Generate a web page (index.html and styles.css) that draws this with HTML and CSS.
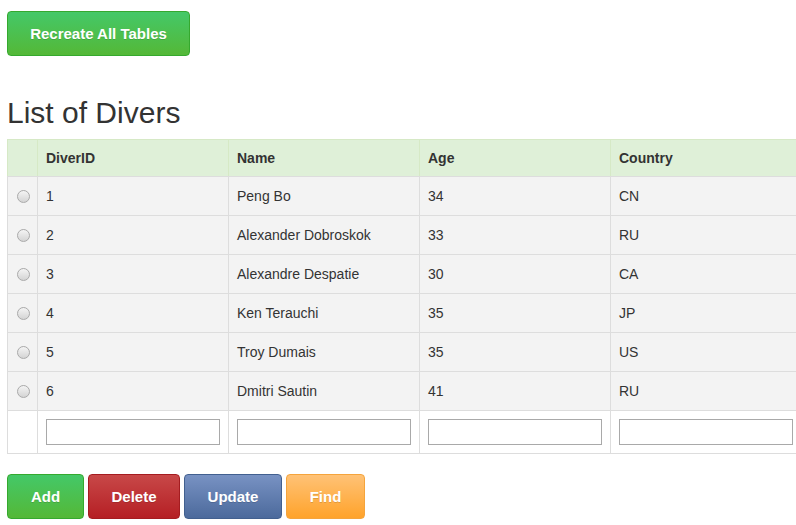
FILE: index.html
```html
<!DOCTYPE html>
<html>
<head>
<meta charset="utf-8">
<link rel="stylesheet" href="styles.css">
</head>
<body>
<div class="page">
  <div class="top-bar">
    <button class="btn btn-green btn-wide">Recreate All Tables</button>
  </div>
  <h2 class="title">List of Divers</h2>
  <table class="grid">
    <thead>
      <tr><th class="sel"></th><th>DiverID</th><th>Name</th><th>Age</th><th>Country</th></tr>
    </thead>
    <tbody>
      <tr><td class="sel"><span class="radio"></span></td><td>1</td><td>Peng Bo</td><td>34</td><td>CN</td></tr>
      <tr><td class="sel"><span class="radio"></span></td><td>2</td><td>Alexander Dobroskok</td><td>33</td><td>RU</td></tr>
      <tr><td class="sel"><span class="radio"></span></td><td>3</td><td>Alexandre Despatie</td><td>30</td><td>CA</td></tr>
      <tr><td class="sel"><span class="radio"></span></td><td>4</td><td>Ken Terauchi</td><td>35</td><td>JP</td></tr>
      <tr><td class="sel"><span class="radio"></span></td><td>5</td><td>Troy Dumais</td><td>35</td><td>US</td></tr>
      <tr><td class="sel"><span class="radio"></span></td><td>6</td><td>Dmitri Sautin</td><td>41</td><td>RU</td></tr>
      <tr class="input-row"><td class="sel"></td><td><input type="text"></td><td><input type="text"></td><td><input type="text"></td><td><input type="text"></td></tr>
    </tbody>
  </table>
  <div class="actions">
    <button class="btn btn-green">Add</button>
    <button class="btn btn-red">Delete</button>
    <button class="btn btn-blue">Update</button>
    <button class="btn btn-orange">Find</button>
  </div>
</div>
</body>
</html>
```
FILE: styles.css
```css
html, body {
  margin: 0;
  padding: 0;
  overflow: hidden;
  background: #fff;
}
body {
  font-family: "Liberation Sans", Arial, sans-serif;
  font-size: 14px;
  line-height: 20px;
  color: #333;
}
.page {
  padding: 11px 0 0 7px;
  width: 820px;
}
.btn {
  font-family: "Liberation Sans", Arial, sans-serif;
  font-size: 15px;
  font-weight: bold;
  color: #fff;
  height: 45px;
  padding: 0;
  border: 1px solid;
  border-radius: 4px;
  cursor: pointer;
  text-shadow: 0 1px 0 rgba(0,0,0,0.15);
  box-sizing: border-box;
}
.btn-wide {
  width: 183px;
}
.btn-green {
  background: linear-gradient(#44c868, #54b837);
  border-color: #35a92e;
}
.btn-red {
  background: linear-gradient(#c84848, #b51f24);
  border-color: #a51c20;
}
.btn-blue {
  background: linear-gradient(#7892c3, #4c6a9c);
  border-color: #42608f;
}
.btn-orange {
  background: linear-gradient(#ffc276, #ffa32b);
  border-color: #f5a43c;
}
.title {
  font-size: 30px;
  font-weight: normal;
  line-height: 33px;
  margin: 40px 0 10px 0;
  color: #333;
}
.grid {
  border-collapse: collapse;
  table-layout: fixed;
  width: 795px;
}
.grid th, .grid td {
  border: 1px solid #ddd;
  padding: 0 8px;
  text-align: left;
  vertical-align: middle;
  width: 174px;
}
.grid .sel {
  width: 13px;
  padding: 0 8px;
}
.grid thead th {
  background: #dff0d8;
  border-color: #d6e9c6;
  border-bottom-color: #ddd;
  height: 36px;
  font-weight: bold;
}
.grid tbody td {
  background: #f3f3f3;
  height: 37px;
  padding-bottom: 1px;
}
.grid tbody .input-row td {
  background: #fff;
  height: 42px;
  padding-bottom: 0;
}
.radio {
  display: block;
  width: 11px;
  height: 11px;
  border-radius: 50%;
  border: 1px solid #aaa;
  background: linear-gradient(#f4f4f4, #d4d4d4);
  margin-left: 1px;
}
.input-row input {
  display: block;
  box-sizing: border-box;
  width: 174px;
  height: 26px;
  border: 1px solid #a9a9a9;
  padding: 2px 4px;
  margin: 0;
  background: #fff;
}
.actions {
  display: flex;
  gap: 4px;
  margin-top: 20px;
}
.actions .btn-green { width: 77px; }
.actions .btn-red { width: 92px; }
.actions .btn-blue { width: 98px; }
.actions .btn-orange { width: 79px; }
```
